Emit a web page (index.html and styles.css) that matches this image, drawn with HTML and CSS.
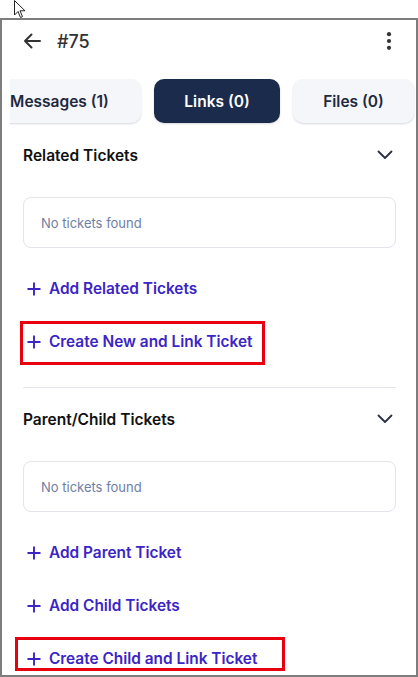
FILE: index.html
```html
<!DOCTYPE html>
<html>
<head>
<meta charset="utf-8">
<link rel="stylesheet" href="styles.css">
</head>
<body>
<svg class="cursor" width="14" height="20" viewBox="0 0 14 20"><path d="M1.5 0.5 L1.5 15 L5 11.5 L7.5 17.5 L9.5 16.6 L7 10.8 L12 10.8 Z" fill="#fff" stroke="#222" stroke-width="1" stroke-linejoin="round"/></svg>
<div class="frame">
  <header class="topbar">
    <svg class="back" width="18" height="16" viewBox="0 0 18 16"><path d="M17 8H2M8.5 1.5L2 8l6.5 6.5" fill="none" stroke="#333" stroke-width="2" stroke-linecap="round" stroke-linejoin="round"/></svg>
    <span class="title">#75</span>
    <svg class="kebab" width="6" height="18" viewBox="0 0 6 18"><circle cx="3" cy="2.2" r="2.1" fill="#333"/><circle cx="3" cy="9" r="2.1" fill="#333"/><circle cx="3" cy="15.8" r="2.1" fill="#333"/></svg>
  </header>
  <nav class="tabs">
    <div class="tabstrip">
      <div class="tab first">Messages (1)</div>
      <div class="tab active">Links (0)</div>
      <div class="tab">Files (0)</div>
    </div>
  </nav>
  <main class="content">
    <section class="section">
      <div class="sec-head">
        <h2>Related Tickets</h2>
        <svg class="chev" width="16" height="10" viewBox="0 0 16 10"><path d="M1.5 1.5L8 8l6.5-6.5" fill="none" stroke="#2b2f44" stroke-width="1.8" stroke-linecap="round" stroke-linejoin="round"/></svg>
      </div>
      <div class="empty">No tickets found</div>
      <div class="action"><svg class="plus" width="14" height="14" viewBox="0 0 14 14"><path d="M7 0.5v13M0.5 7h13" stroke="#3b25c4" stroke-width="1.9"/></svg><span>Add Related Tickets</span></div>
      <div class="action"><svg class="plus" width="14" height="14" viewBox="0 0 14 14"><path d="M7 0.5v13M0.5 7h13" stroke="#3b25c4" stroke-width="1.9"/></svg><span>Create New and Link Ticket</span><div class="mark mark1"></div></div>
    </section>
    <hr class="divider">
    <section class="section">
      <div class="sec-head">
        <h2>Parent/Child Tickets</h2>
        <svg class="chev" width="16" height="10" viewBox="0 0 16 10"><path d="M1.5 1.5L8 8l6.5-6.5" fill="none" stroke="#2b2f44" stroke-width="1.8" stroke-linecap="round" stroke-linejoin="round"/></svg>
      </div>
      <div class="empty">No tickets found</div>
      <div class="action"><svg class="plus" width="14" height="14" viewBox="0 0 14 14"><path d="M7 0.5v13M0.5 7h13" stroke="#3b25c4" stroke-width="1.9"/></svg><span>Add Parent Ticket</span></div>
      <div class="action"><svg class="plus" width="14" height="14" viewBox="0 0 14 14"><path d="M7 0.5v13M0.5 7h13" stroke="#3b25c4" stroke-width="1.9"/></svg><span>Add Child Tickets</span></div>
      <div class="action"><svg class="plus" width="14" height="14" viewBox="0 0 14 14"><path d="M7 0.5v13M0.5 7h13" stroke="#3b25c4" stroke-width="1.9"/></svg><span>Create Child and Link Ticket</span><div class="mark mark2"></div></div>
    </section>
  </main>
</div>
</body>
</html>
```
FILE: styles.css
```css
html, body {
  margin: 0;
  padding: 0;
  background: #fff;
}
body {
  width: 418px;
  height: 677px;
  overflow: hidden;
  font-family: Inter, "Noto Sans", sans-serif;
  position: relative;
}
.cursor {
  position: absolute;
  left: 13px;
  top: 0;
  z-index: 5;
}
.frame {
  margin-top: 18px;
  width: 418px;
  height: 659px;
  box-sizing: border-box;
  border: 2px solid #7d7d7d;
  overflow: hidden;
  background: #fff;
}
.topbar {
  height: 42px;
  display: flex;
  align-items: center;
  padding-left: 21px;
  padding-right: 24px;
}
.back {
  display: block;
}
.title {
  margin-left: 16px;
  font-size: 18px;
  font-weight: 500;
  color: #333;
  flex: 1;
}
.kebab {
  display: block;
}
.tabs {
  margin-top: 17px;
  margin-left: 8px;
  overflow: hidden;
  padding-bottom: 3px;
}
.tabstrip {
  display: flex;
  gap: 13px;
  margin-left: -32px;
}
.tab {
  flex: none;
  height: 44px;
  box-sizing: border-box;
  padding: 0;
  display: flex;
  align-items: center;
  justify-content: center;
  border-radius: 10px;
  background: #f4f6fa;
  box-shadow: 0 1px 2px rgba(30, 40, 70, 0.18);
  font-size: 15.5px;
  font-weight: 600;
  color: #1f2940;
}
.tab.active {
  background: #1b2b4b;
  color: #fff;
  width: 126px;
}
.tab.first {
  width: 163px;
}
.tabstrip .tab:last-child {
  width: 121px;
}
.content {
  padding: 0 20px 0 21px;
}
.sec-head {
  height: 40px;
  display: flex;
  align-items: center;
  justify-content: space-between;
  padding-right: 3px;
}
.section:first-child .sec-head {
  margin-top: 9px;
}
.sec-head h2 {
  margin: 0;
  font-size: 15.5px;
  font-weight: 600;
  color: #111;
}
.chev {
  display: block;
}
.empty {
  margin-top: 22px;
  height: 51px;
  box-sizing: border-box;
  border: 1px solid #e1e4ec;
  border-radius: 8px;
  display: flex;
  align-items: center;
  padding-left: 17px;
  font-size: 13px;
  color: #6f7ea3;
}
.empty + .action {
  margin-top: 14px;
}
.action {
  position: relative;
  height: 53px;
  display: flex;
  align-items: center;
  padding-left: 4px;
  gap: 8px;
  font-size: 15.4px;
  font-weight: 600;
  color: #3b25c4;
}
.plus {
  display: block;
}
.mark {
  position: absolute;
  border: 3px solid #e8000f;
  box-sizing: border-box;
}
.mark1 {
  left: -3px;
  top: 6px;
  width: 245px;
  height: 44px;
}
.mark2 {
  left: -8px;
  top: 5px;
  width: 270px;
  height: 34px;
}
.divider {
  margin: 19px 0 11px;
  border: 0;
  height: 1px;
  background: #e3e6ed;
}
```
